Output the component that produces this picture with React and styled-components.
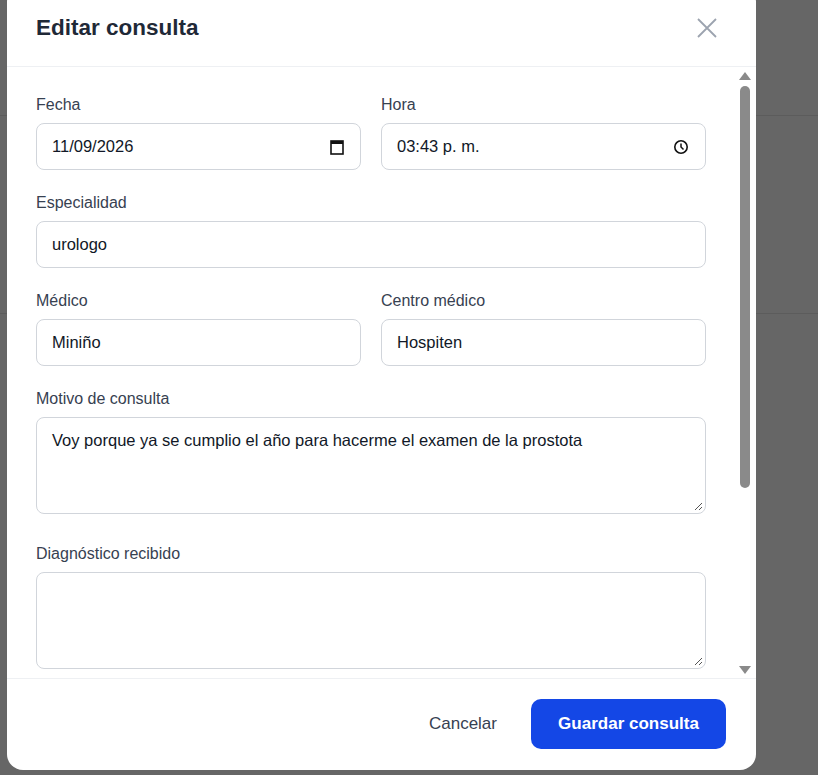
import React from "react";
import styled, { createGlobalStyle } from "styled-components";

const Global = createGlobalStyle`
  html, body { margin: 0; padding: 0; }
  body { font-family: "Liberation Sans", Arial, sans-serif; }
`;

const Backdrop = styled.div`
  position: relative;
  width: 818px;
  height: 775px;
  background: #666666;
  overflow: hidden;
`;
const BgLine = styled.div`
  position: absolute;
  left: 0; right: 0;
  top: ${p => p.$top}px;
  height: 1px;
  background: #5c5c5c;
`;

const Modal = styled.div`
  position: absolute;
  left: 7px;
  top: -14px;
  width: 749px;
  height: 784px;
  background: #fff;
  border-radius: 16px;
  display: flex;
  flex-direction: column;
  overflow: hidden;
`;
const Header = styled.div`
  height: 81px;
  padding: 4px 29px 0 29px;
  box-sizing: border-box;
  border-bottom: 1px solid #eef0f3;
  display: flex;
  align-items: center;
  justify-content: space-between;
  flex-shrink: 0;
`;
const Title = styled.h2`
  margin: 0;
  font-size: 22.5px;
  font-weight: 700;
  color: #1f2937;
`;
const Close = styled.button`
  border: none; background: none; padding: 0;
  margin-right: 10px;
  display: flex;
`;
const BodyRow = styled.div`
  height: 611px;
  flex-shrink: 0;
  display: flex;
`;
const Body = styled.div`
  flex: 1;
  overflow: hidden;
  padding: 28px 30px 0 29px;
  box-sizing: border-box;
`;
const Scrollbar = styled.div`
  width: 17px;
  margin-right: 3px;
  display: flex;
  flex-direction: column;
  align-items: center;
  padding: 5px 0 4px;
  box-sizing: border-box;
  gap: 6px;
`;
const Thumb = styled.div`
  width: 10px;
  height: 402px;
  border-radius: 5px;
  background: #8a8a8a;
`;
const Track = styled.div`
  flex: 1;
`;
const Row = styled.div`
  display: grid;
  grid-template-columns: 1fr 1fr;
  gap: 20px;
`;
const Field = styled.div`
  display: flex;
  flex-direction: column;
  margin-bottom: ${p => p.$mb ?? 23}px;
`;
const Label = styled.label`
  font-size: 16px;
  color: #374151;
  margin-bottom: 9px;
  line-height: 19px;
`;
const InputBox = styled.div`
  height: 47px;
  border: 1px solid #d1d5db;
  border-radius: 8px;
  box-sizing: border-box;
  display: flex;
  align-items: center;
  padding: 0 16px 0 15px;
  justify-content: space-between;
  font-size: 16.5px;
  color: #111827;
`;
const Area = styled.div`
  position: relative;
  height: ${p => p.$h}px;
  border: 1px solid #d1d5db;
  border-radius: 8px;
  box-sizing: border-box;
  padding: 13px 15px;
  font-size: 16.5px;
  color: #111827;
`;
const Grip = styled.svg`
  position: absolute;
  right: 2px;
  bottom: 2px;
`;
const Footer = styled.div`
  flex: 1;
  border-top: 1px solid #eef0f3;
  display: flex;
  align-items: flex-start;
  justify-content: flex-end;
  gap: 34px;
  padding: 20px 30px 0 0;
`;
const Cancel = styled.button`
  border: none; background: none;
  font-family: inherit;
  font-size: 17px;
  color: #374151;
  height: 50px;
  padding: 0;
`;
const Save = styled.button`
  border: none;
  background: #1447e6;
  color: #fff;
  font-family: inherit;
  font-weight: 700;
  font-size: 17px;
  width: 195px;
  height: 50px;
  border-radius: 10px;
`;

const GripIcon = () => (
  <Grip width="10" height="10" viewBox="0 0 10 10">
    <path d="M9 2 L2 9 M9 6 L6 9" stroke="#555" strokeWidth="1" />
  </Grip>
);

export default function App() {
  return (
    <>
      <Global />
      <Backdrop>
        <BgLine $top={115} />
        <BgLine $top={313} />
        <Modal>
          <Header>
            <Title>Editar consulta</Title>
            <Close>
              <svg width="20" height="20" viewBox="0 0 20 20">
                <path d="M1 1 L19 19 M19 1 L1 19" stroke="#9ca3af" strokeWidth="1.8" />
              </svg>
            </Close>
          </Header>
          <BodyRow>
            <Body>
              <Row>
                <Field>
                  <Label>Fecha</Label>
                  <InputBox>
                    11/09/2026
                    <svg width="14" height="16" viewBox="0 0 14 16">
                      <rect x="1" y="2" width="12" height="13" fill="none" stroke="#111" strokeWidth="1.6" />
                      <rect x="1" y="2" width="12" height="3" fill="#111" />
                    </svg>
                  </InputBox>
                </Field>
                <Field>
                  <Label>Hora</Label>
                  <InputBox>
                    03:43 p. m.
                    <svg width="16" height="16" viewBox="0 0 16 16">
                      <circle cx="8" cy="8" r="6.2" fill="none" stroke="#111" strokeWidth="1.6" />
                      <path d="M8 4.5 V8 L10.5 10.5" fill="none" stroke="#111" strokeWidth="1.5" />
                    </svg>
                  </InputBox>
                </Field>
              </Row>
              <Field>
                <Label>Especialidad</Label>
                <InputBox>urologo</InputBox>
              </Field>
              <Row>
                <Field>
                  <Label>Médico</Label>
                  <InputBox>Miniño</InputBox>
                </Field>
                <Field>
                  <Label>Centro médico</Label>
                  <InputBox>Hospiten</InputBox>
                </Field>
              </Row>
              <Field $mb={30}>
                <Label>Motivo de consulta</Label>
                <Area $h={97}>
                  Voy porque ya se cumplio el año para hacerme el examen de la prostota
                  <GripIcon />
                </Area>
              </Field>
              <Field $mb={30}>
                <Label>Diagnóstico recibido</Label>
                <Area $h={97}>
                  <GripIcon />
                </Area>
              </Field>
              <Field>
                <Label>Notas</Label>
                <Area $h={97}>
                  <GripIcon />
                </Area>
              </Field>
            </Body>
            <Scrollbar>
              <svg width="12" height="8" viewBox="0 0 12 8"><path d="M6 0 L12 8 H0 Z" fill="#8a8a8a" /></svg>
              <Thumb />
              <Track />
              <svg width="12" height="8" viewBox="0 0 12 8"><path d="M0 0 H12 L6 8 Z" fill="#8a8a8a" /></svg>
            </Scrollbar>
          </BodyRow>
          <Footer>
            <Cancel>Cancelar</Cancel>
            <Save>Guardar consulta</Save>
          </Footer>
        </Modal>
      </Backdrop>
    </>
  );
}
